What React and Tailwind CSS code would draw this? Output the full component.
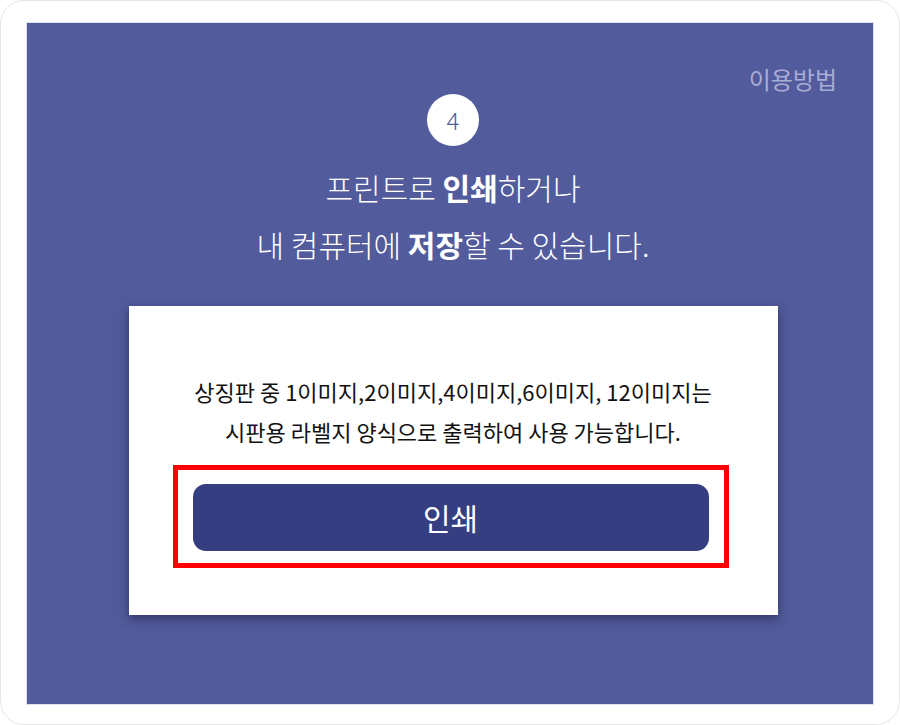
export default function App() {
  return (
    <div className="w-[900px] h-[725px] bg-white font-['Noto_Sans_CJK_KR','Noto_Sans',sans-serif]">
      <div className="w-[900px] h-[725px] border border-[#e6e6e6] rounded-[24px] pl-[25px] pt-[21px]">
        <div className="w-[848px] h-[683px] bg-[#525b9b] border border-[#dfe1ee] flex flex-col pl-[6px]">
          <div className="flex justify-end pr-[36px] pt-[42px]">
            <span className="text-[24px] leading-[28px] text-[#a9acd4]">이용방법</span>
          </div>
          <div className="mx-auto mt-px w-[52px] h-[52px] rounded-full bg-white flex items-center justify-center text-[24px] font-light text-[#525b9b]">
            4
          </div>
          <div className="mt-[13px] text-center text-white text-[30px] font-light leading-[57px]">
            <p>
              프린트로 <b className="font-bold">인쇄</b>하거나
            </p>
            <p>
              내 컴퓨터에 <b className="font-bold">저장</b>할 수 있습니다.
            </p>
          </div>
          <div className="mx-auto mt-[33px] w-[649px] h-[309px] bg-white shadow-[0_4px_10px_rgba(20,24,60,0.55)] pt-[65px]">
            <div className="text-center text-[22px] leading-[40px] text-[#111]">
              <p>상징판 중 1이미지,2이미지,4이미지,6이미지, 12이미지는</p>
              <p>시판용 라벨지 양식으로 출력하여 사용 가능합니다.</p>
            </div>
            <div className="ml-[44px] mt-[14px] w-[556px] h-[103px] border-[5px] border-[#ff0000] pl-[15px] pr-[15px] pt-[14px]">
              <button className="w-full h-[67px] rounded-[13px] bg-[#353e80] text-white text-[30px] font-normal">
                인쇄
              </button>
            </div>
          </div>
        </div>
      </div>
    </div>
  );
}
